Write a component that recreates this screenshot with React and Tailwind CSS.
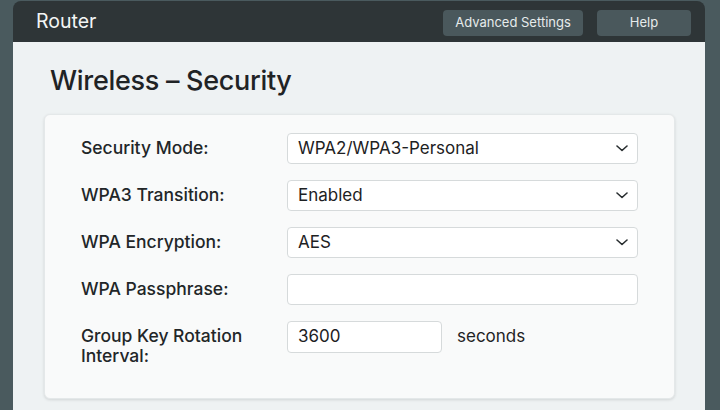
import React from "react";

function Chevron() {
  return (
    <svg width="12" height="7" viewBox="0 0 12 7" fill="none" className="shrink-0">
      <path d="M1 1l5 4.5L11 1" stroke="#2a2f31" strokeWidth="1.6" strokeLinecap="round" strokeLinejoin="round" />
    </svg>
  );
}

function Select({ value }) {
  return (
    <div className="w-[351px] h-[31px] bg-white border border-[#d6dadb] rounded-[4px] flex items-center justify-between pl-[10px] pr-[9px]">
      <span className="text-[17px] text-[#1d2123]">{value}</span>
      <Chevron />
    </div>
  );
}

function Row({ label, children }) {
  return (
    <div className="flex items-center h-[31px]">
      <div className="w-[206px] text-[17.5px] font-medium text-[#222628]">{label}</div>
      {children}
    </div>
  );
}

export default function App() {
  return (
    <div className="w-[720px] h-[410px] bg-[#4a5a5e] pl-[13px] pr-[15px] pt-[1px] overflow-hidden" style={{ fontFamily: "Inter, 'Liberation Sans', Arial, sans-serif" }}>
      <div className="h-full rounded-t-[8px] overflow-hidden flex flex-col">
        <div className="h-[41px] shrink-0 bg-[#2e3537] flex items-center justify-between pl-[23px] pr-[14px]">
          <span className="text-[19.5px] text-[#f3f5f5]">Router</span>
          <div className="flex items-center gap-[14px] pt-[2px]">
            <div className="w-[140px] h-[26px] rounded-[4px] bg-[#4a585c] flex items-center justify-center text-[13px] text-[#e6ebeb]">Advanced Settings</div>
            <div className="w-[94px] h-[26px] rounded-[4px] bg-[#4a585c] flex items-center justify-center text-[13px] text-[#e6ebeb]">Help</div>
          </div>
        </div>
        <div className="flex-1 bg-[#eef2f3] pl-[31px] pr-[30px] pt-[22px]">
          <h1 className="pl-[6px] text-[27px] font-medium tracking-[-0.3px] leading-[34px] text-[#1f2325] h-[50px]">Wireless – Security</h1>
          <div className="bg-[#f9fafa] rounded-[6px] border border-[#e4e8e9] shadow-[0_1px_3px_rgba(0,0,0,0.12)] h-[285px] pl-[36px] pr-[36px] pt-[18px] flex flex-col gap-[16px]">
            <Row label="Security Mode:"><Select value="WPA2/WPA3-Personal" /></Row>
            <Row label="WPA3 Transition:"><Select value="Enabled" /></Row>
            <Row label="WPA Encryption:"><Select value="AES" /></Row>
            <Row label="WPA Passphrase:">
              <div className="w-[351px] h-[31px] bg-white border border-[#d6dadb] rounded-[4px]" />
            </Row>
            <div className="flex items-start">
              <div className="w-[206px] text-[17.5px] font-medium leading-[20px] pt-[5px] text-[#222628]">Group Key Rotation<br />Interval:</div>
              <div className="w-[155px] h-[32px] bg-white border border-[#d6dadb] rounded-[4px] flex items-center pl-[10px] text-[17px] text-[#1d2123]">3600</div>
              <div className="ml-[15px] h-[32px] flex items-center text-[17px] text-[#1f2325]">seconds</div>
            </div>
          </div>
        </div>
      </div>
    </div>
  );
}
